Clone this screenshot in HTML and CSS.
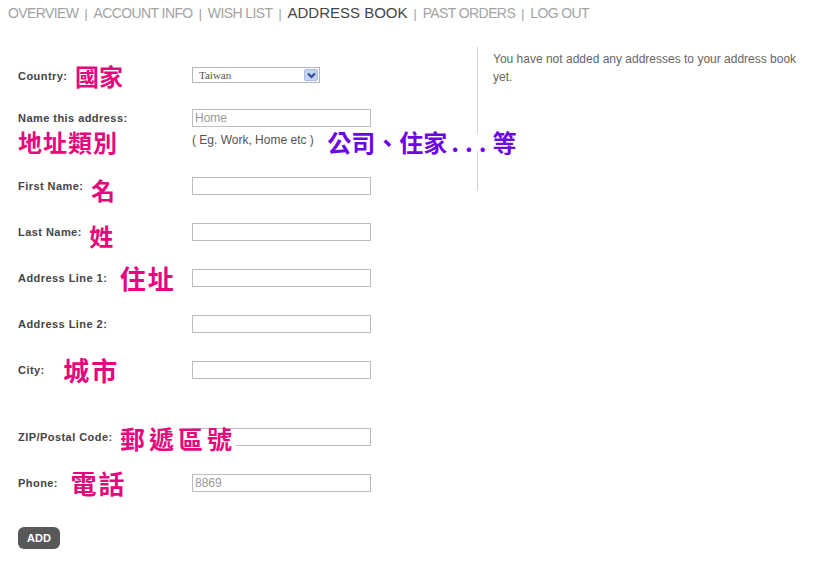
FILE: index.html
```html
<!DOCTYPE html>
<html lang="zh-Hant">
<head>
  <meta charset="UTF-8">
  <title>Address Book</title>
  <link rel="stylesheet" href="styles.css">
</head>
<body>
  <div class="nav"><a href="#">OVERVIEW</a><span class="sep">|</span><a href="#">ACCOUNT INFO</a><span class="sep">|</span><a href="#">WISH LIST</a><span class="sep">|</span><a href="#" class="active">ADDRESS BOOK</a><span class="sep">|</span><a href="#">PAST ORDERS</a><span class="sep">|</span><a href="#">LOG OUT</a></div>

  <div class="page">
    <form class="form">
      <div class="row row-country">
        <div class="label">Country: <span class="tag">國家</span></div>
        <div class="field">
          <div class="select">
            <span>Taiwan</span>
            <span class="drop">
              <svg width="9" height="7" viewBox="0 0 9 7"><path d="M1 1.5 L4.5 5 L8 1.5" fill="none" stroke="#2a4a8a" stroke-width="2"/></svg>
            </span>
          </div>
        </div>
      </div>

      <div class="row row-name">
        <div class="label">
          Name this address:
          <div class="tag tag-block">地址類別</div>
        </div>
        <div class="field">
          <input type="text" placeholder="Home">
          <div class="hint">( Eg. Work, Home etc ) <span class="tag tag-purple">公司、住家<span class="dots">...</span>等</span></div>
        </div>
      </div>

      <div class="row">
        <div class="label">First Name: <span class="tag tag-down">名</span></div>
        <div class="field"><input type="text"></div>
      </div>

      <div class="row">
        <div class="label">Last Name: <span class="tag tag-down">姓</span></div>
        <div class="field"><input type="text"></div>
      </div>

      <div class="row">
        <div class="label">Address Line 1: <span class="tag tag-wide">住址</span></div>
        <div class="field"><input type="text"></div>
      </div>

      <div class="row">
        <div class="label">Address Line 2:</div>
        <div class="field"><input type="text"></div>
      </div>

      <div class="row row-city">
        <div class="label">City: <span class="tag tag-wide tag-far">城市</span></div>
        <div class="field"><input type="text"></div>
      </div>

      <div class="row">
        <div class="label">ZIP/Postal Code: <span class="tag tag-zip">郵遞區號</span></div>
        <div class="field"><input type="text"></div>
      </div>

      <div class="row row-phone">
        <div class="label">Phone: <span class="tag tag-wide">電話</span></div>
        <div class="field"><input type="text" placeholder="8869"></div>
      </div>

      <button type="button" class="btn">ADD</button>
    </form>

    <div class="aside">
      You have not added any addresses to your address book yet.
    </div>
  </div>
</body>
</html>
```

FILE: styles.css
```css
body {
  margin: 0;
  font-family: 'Liberation Sans', Arial, sans-serif;
  background: #fff;
  color: #444;
}

.nav {
  padding: 4px 0 0 8px;
  height: 20px;
  line-height: 18px;
  white-space: nowrap;
}

.nav a {
  font-size: 14px;
  letter-spacing: -0.6px;
  color: #a3a3a3;
  text-decoration: none;
}

.nav a.active {
  font-size: 15px;
  letter-spacing: 0;
  color: #444;
}

.nav .sep {
  font-size: 12px;
  color: #999;
  margin: 0 6px;
}

.page {
  display: flex;
}

.form {
  width: 477px;
  padding: 43px 0 0 18px;
  box-sizing: border-box;
}

.row {
  display: flex;
  margin-bottom: 28px;
}

.row-country {
  margin-bottom: 24px;
}

.row-name {
  margin-bottom: 22px;
}

.row-city {
  margin-bottom: 49px;
}

.row-phone {
  margin-bottom: 35px;
}

.label {
  width: 174px;
  font-size: 11px;
  font-weight: bold;
  letter-spacing: 0.45px;
  line-height: 18px;
  color: #444;
  white-space: nowrap;
}

.field {
  width: 179px;
}

input {
  display: block;
  width: 179px;
  height: 18px;
  box-sizing: border-box;
  border: 1px solid #bdbdbd;
  padding: 0 2px;
  font-family: 'Liberation Sans', Arial, sans-serif;
  font-size: 12px;
  margin: 0;
}

input::placeholder {
  color: #999;
}

.select {
  width: 128px;
  height: 16px;
  box-sizing: border-box;
  border: 1px solid #b7b7b7;
  display: flex;
  align-items: center;
  justify-content: space-between;
  padding: 0 1px 0 6px;
  font-family: 'Liberation Serif', serif;
  font-size: 11px;
  color: #555;
}

.drop {
  width: 14px;
  height: 12px;
  background: #c3d3f4;
  border: 1px solid #a9bde6;
  box-sizing: border-box;
  border-radius: 2px;
  display: flex;
  align-items: center;
  justify-content: center;
}

.hint {
  margin-top: 4px;
  font-size: 12px;
  font-weight: normal;
  color: #555;
  white-space: nowrap;
  line-height: 18px;
}

.tag {
  position: relative;
  z-index: 1;
  display: inline-block;
  height: 18px;
  line-height: 18px;
  margin-left: 4px;
  font-family: 'Noto Sans CJK TC', sans-serif;
  font-size: 24px;
  font-weight: bold;
  letter-spacing: 0;
  color: #e4087c;
  background: #fff;
  vertical-align: top;
}

.tag-block {
  display: block;
  margin: 2px 0 0 0;
  height: 26px;
  line-height: 26px;
  letter-spacing: 1px;
}

.tag-purple {
  color: #6c06e6;
  margin-left: 10px;
  top: 2px;
  padding-right: 4px;
}

.tag-purple .dots {
  letter-spacing: 6px;
  margin-left: 4px;
}

.tag-down {
  top: 4px;
}

.tag-wide {
  font-size: 26px;
  letter-spacing: 2px;
  margin-left: 9px;
}

.tag-far {
  margin-left: 15px;
}

.tag-zip {
  font-size: 25px;
  letter-spacing: 4px;
  margin-left: 4px;
  top: 1px;
}

.btn {
  display: block;
  width: 42px;
  height: 22px;
  padding: 0;
  border: none;
  border-radius: 6px;
  background: #585858;
  color: #fff;
  font-family: 'Liberation Sans', Arial, sans-serif;
  font-size: 11px;
  font-weight: bold;
  cursor: pointer;
}

.aside {
  margin-top: 23px;
  height: 141px;
  border-left: 1px solid #cfcfcf;
  padding: 3px 0 0 15px;
  width: 315px;
  font-size: 12px;
  line-height: 18px;
  color: #666;
}
```
